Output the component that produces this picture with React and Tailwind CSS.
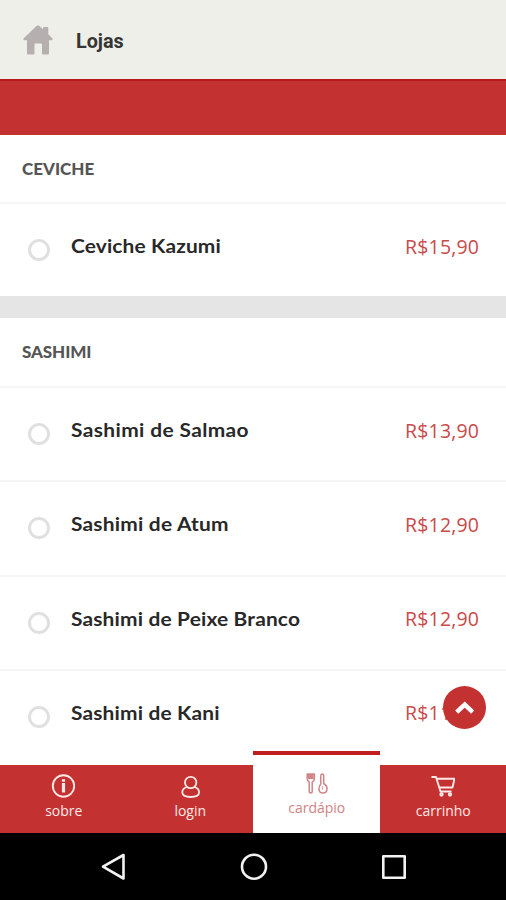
import React from 'react';

const sections = [
  {
    title: 'CEVICHE',
    titleClass: 'tracking-normal',
    headerClass: 'h-[67px]',
    items: [{ name: 'Ceviche Kazumi', price: 'R$15,90', tracking: 'tracking-[0.120px]' }],
  },
  {
    title: 'SASHIMI',
    titleClass: 'tracking-[-0.100px]',
    headerClass: 'h-[68px]',
    items: [
      { name: 'Sashimi de Salmao', price: 'R$13,90', tracking: 'tracking-[0.350px]' },
      { name: 'Sashimi de Atum', price: 'R$12,90', tracking: 'tracking-[0.200px]' },
      { name: 'Sashimi de Peixe Branco', price: 'R$12,90', tracking: 'tracking-[0.150px]' },
      { name: 'Sashimi de Kani', price: 'R$11,90', tracking: 'tracking-[0.150px]' },
    ],
  },
];

const HomeIcon = () => (
  <svg className="h-[30px] w-[30px]" viewBox="0 0 30 30" fill="#b5b0af">
    <path d="M13.800.8Q15 0 16.200.8L20 4.300V3q0-1 1-1h3.300q1 0 1 1v6.200l4 4q1.200 1.800-.8 2H26V28.500q0 1-1 1h-5q-1 0-1-1V19.500q0-1-1-1h-5.500q-1 0-1 1v9q0 1-1 1H5q-1 0-1-1V15.200H1.500q-2-.2-.8-2z" />
  </svg>
);

const InfoIcon = () => (
  <svg className="h-6 w-6" viewBox="0 0 24 24" fill="none" stroke="currentColor">
    <circle cx="12.500" cy="12" r="10.700" strokeWidth="1.900" />
    <path d="M12.500 9v9.500M12.500 5.200v2.500" strokeWidth="3.200" />
  </svg>
);

const UserIcon = () => (
  <svg className="h-6 w-6" viewBox="0 0 24 24" fill="none" stroke="currentColor" strokeWidth="1.800">
    <circle cx="12.700" cy="8.500" r="5.700" />
    <path d="M9 13C5.700 14 4.300 16.200 4.300 18.300C4.300 21.500 7.800 23 12.700 23S21.100 21.500 21.100 18.300C21.100 16.200 19.700 14 16.400 13" />
  </svg>
);

const CutleryIcon = () => (
  <svg className="h-6 w-6" viewBox="-1 -0.500 24 24" fill="none" stroke="currentColor" strokeWidth="1.500" strokeLinejoin="round">
    <path d="M2.200 2.500v5q0 2 2 3v9.500q0 1.500 1.500 1.500t1.500-1.500v-9.500q2.200-1 2.200-3v-5h-1.700v4.500h-1.200v-4.500h-1.500v4.500H3.800v-4.500z" />
    <path d="M17 2.500Q18.700 2.500 18.700 4.500V12Q22 14 22 17Q22 21.500 18 21.500Q14 21.500 14 17.500Q14 14.500 15.800 12.500V4.500Q15.800 2.500 17 2.500z" />
    <path d="M17.300 14.500v4" strokeWidth=".8" />
  </svg>
);

const CartIcon = () => (
  <svg className="h-6 w-6" viewBox="0 0 24 24" fill="none" stroke="currentColor" strokeWidth="1.900" strokeLinejoin="round">
    <path d="M.5 3H5l4.500 14.500h11" />
    <path d="M5.500 4.800h18l-2 8.700H8.500" />
    <circle cx="10.500" cy="20.500" r="1.200" />
    <circle cx="19" cy="20.500" r="1.200" />
  </svg>
);

const tabs = [
  { label: 'sobre', Icon: InfoIcon },
  { label: 'login', Icon: UserIcon },
  { label: 'cardápio', Icon: CutleryIcon, active: true },
  { label: 'carrinho', Icon: CartIcon },
];

const MenuItem = ({ name, price, tracking }) => (
  <li className="flex h-[94.200px] items-start border-t-2 border-[#f5f5f5] pl-[28px] pr-[27px]">
    <span className="mt-[35px] h-[22px] w-[22px] shrink-0 rounded-full border-3 border-[#e0e0e0]" />
    <span className="ml-[21px] mt-[27px] origin-left scale-x-110 whitespace-nowrap font-['Lato'] text-[19px] font-bold leading-[30px] text-[#282828]">
      <span className={tracking}>{name}</span>
    </span>
    <span className="ml-auto mt-[27.500px] font-['Open_Sans'] text-[19.500px] leading-[30px] tracking-[0.150px] text-[#c94a4a]">
      {price}
    </span>
  </li>
);

const Tab = ({ label, Icon, active }) => (
  <button
    className={
      active
        ? "-mt-[14px] flex flex-1 flex-col items-center border-t-4 border-[#c01f22] bg-white pt-[16px] font-['Open_Sans'] text-[14px] leading-[22px] text-[#d08486]"
        : "flex flex-1 flex-col items-center pt-[9px] font-['Open_Sans'] text-[14px] leading-[22px] text-[#ffe9e7]"
    }
  >
    <Icon />
    <span className="mt-0.5 pl-px">{label}</span>
  </button>
);

const App = () => {
  return (
    <div className="relative flex h-[900px] w-[506px] flex-col overflow-hidden bg-white">
      <header className="flex h-[79px] shrink-0 items-center bg-[#efefea] pl-[23px] pt-px">
        <HomeIcon />
        <h1 className="ml-[23px] pt-[3px] font-['Roboto'] text-[19.800px] font-bold leading-6 text-[#353533]">Lojas</h1>
      </header>
      <div className="h-14 shrink-0 border-t-2 border-[#b9191c] bg-[#c43131]" />

      <main className="h-[630px] shrink-0 overflow-hidden">
        {sections.map((section, index) => (
          <section key={section.title} className={index > 0 ? 'border-t-[22px] border-[#e5e5e5]' : ''}>
            <h2 className={`flex items-center pl-[22px] font-['Lato'] text-[17px] font-black text-[#555] ${section.headerClass}`}>
              <span className={section.titleClass}>{section.title}</span>
            </h2>
            <ul>
              {section.items.map((item) => (
                <MenuItem key={item.name} {...item} />
              ))}
            </ul>
          </section>
        ))}
      </main>

      <button className="absolute left-[443px] top-[686px] flex h-[43px] w-[43px] items-center justify-center rounded-full bg-[#c43131]">
        <svg className="h-5 w-5" viewBox="0 0 20 20" fill="none" stroke="#fff" strokeWidth="4.500">
          <path d="M1.700 14.200L9.700 6.700L17.700 14.200" />
        </svg>
      </button>

      <nav className="flex h-[68px] shrink-0 bg-[#c43131]">
        {tabs.map((tab) => (
          <Tab key={tab.label} {...tab} />
        ))}
      </nav>

      <footer className="flex h-[67px] shrink-0 items-center justify-between bg-black pl-[99px] pr-[98px]">
        <svg className="h-7 w-7" viewBox="0 0 28 28" fill="none" stroke="#f2f2f2" strokeWidth="2.600" strokeLinejoin="round">
          <path d="M24.500 2v23.500L4 13.700z" />
        </svg>
        <svg className="h-7 w-7" viewBox="0 0 28 28" fill="none" stroke="#f2f2f2" strokeWidth="2.600">
          <circle cx="14" cy="13.700" r="12" />
        </svg>
        <svg className="h-7 w-7" viewBox="0 0 28 28" fill="none" stroke="#f2f2f2" strokeWidth="2.600" strokeLinejoin="round">
          <rect x="3.300" y="3.300" width="21.400" height="21.400" />
        </svg>
      </footer>
    </div>
  );
};

export default App;
